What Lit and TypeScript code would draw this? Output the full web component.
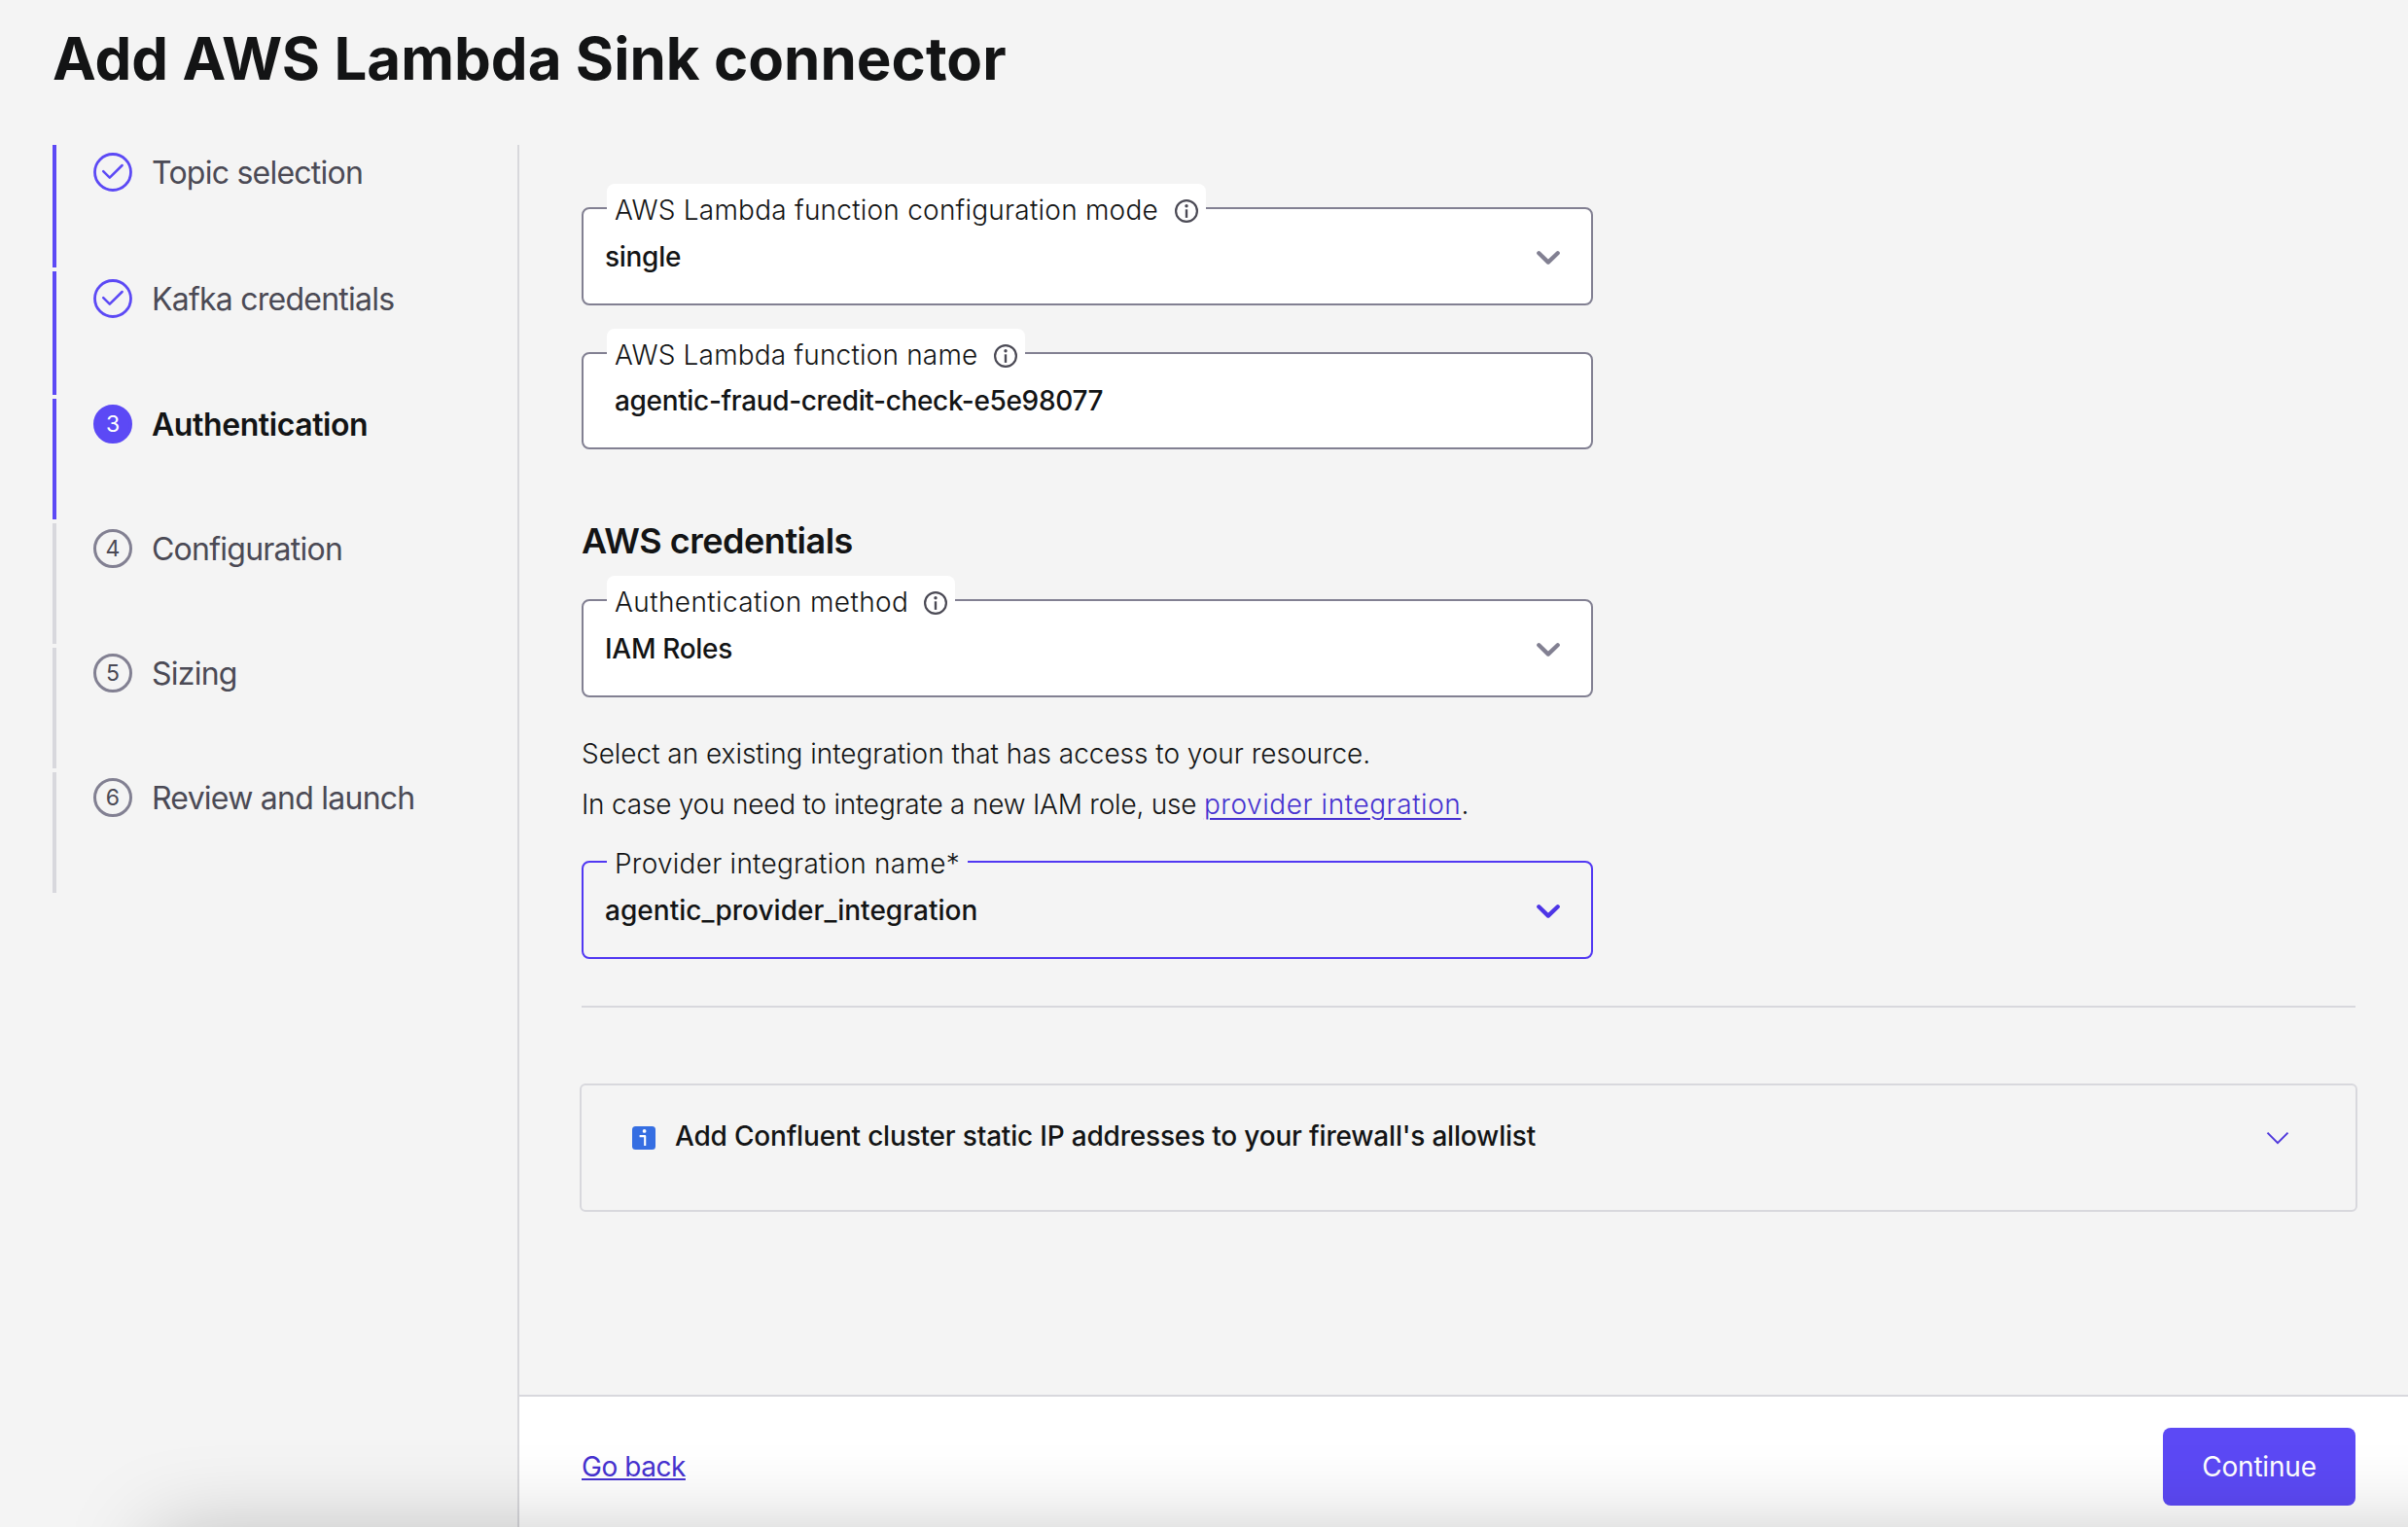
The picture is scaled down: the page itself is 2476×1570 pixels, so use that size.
import { LitElement, html, css, nothing, type TemplateResult } from "lit";
import { customElement } from "lit/decorators.js";

type StepState = "done" | "current" | "todo";
interface Step { label: string; state: StepState; }
interface Field { id: string; label: string; value: string; info: boolean; select: boolean; }

const STEPS: Step[] = [
  { label: "Topic selection", state: "done" },
  { label: "Kafka credentials", state: "done" },
  { label: "Authentication", state: "current" },
  { label: "Configuration", state: "todo" },
  { label: "Sizing", state: "todo" },
  { label: "Review and launch", state: "todo" },
];

const MODE: Field = { id: "mode", label: "AWS Lambda function configuration mode", value: "single", info: true, select: true };
const NAME: Field = { id: "name", label: "AWS Lambda function name", value: "agentic-fraud-credit-check-e5e98077", info: true, select: false };
const METHOD: Field = { id: "method", label: "Authentication method", value: "IAM Roles", info: true, select: true };
const PROVIDER: Field = { id: "provider", label: "Provider integration name*", value: "agentic_provider_integration", info: false, select: true };

const checkIcon = html`<svg class="check" viewBox="0 0 40 40" width="40" height="40" fill="none" stroke="currentColor">
  <circle cx="20" cy="20" r="18.5" stroke-width="2.8"></circle>
  <path d="M10.2 19.2 L16.8 25.6 L29.6 13" stroke-width="2.5" stroke-linecap="round" stroke-linejoin="round"></path>
</svg>`;

const infoIcon = html`<svg class="info" viewBox="0 0 24 24" width="24" height="24">
  <circle cx="12" cy="12" r="10.9" fill="none" stroke="currentColor" stroke-width="2.2"></circle>
  <circle cx="12" cy="6.8" r="1.7" fill="currentColor"></circle>
  <path d="M12 10.3 V18.9" stroke="currentColor" stroke-width="2.4"></path>
</svg>`;

const selectChevron = html`<svg class="chevron" viewBox="0 0 24 16" width="24" height="16" fill="none" stroke="currentColor">
  <path d="M2.3 3.3 L11.9 12.6 L21.7 3.3" stroke-width="4.3" stroke-linecap="round" stroke-linejoin="round"></path>
</svg>`;

const noticeIcon = html`<svg class="notice-icon" viewBox="0 0 24 24" width="24" height="24">
  <rect width="24" height="24" rx="3.5" fill="#356ee2"></rect>
  <circle cx="12.6" cy="4.9" r="1.9" fill="#fff"></circle>
  <path d="M7.6 10.1 H13.2 V20" fill="none" stroke="#fff" stroke-width="2.1" stroke-linejoin="round"></path>
</svg>`;

const thinChevron = html`<svg class="thin" viewBox="0 0 24 14" width="24" height="14" fill="none" stroke="currentColor">
  <path d="M1.5 1.6 L12 12.2 L22.5 1.6" stroke-width="2"></path>
</svg>`;

@customElement("app-root")
export class AppRoot extends LitElement {
  static styles = css`
    :host {
      display: flex;
      flex-direction: column;
      position: relative;
      width: 2476px;
      height: 1570px;
      overflow: hidden;
      box-sizing: border-box;
      background: #f4f4f4;
      color: #131415;
      font-family: Inter, "Liberation Sans", sans-serif;
      font-size: 28px;
      font-weight: 300;
    }
    *, *::before { box-sizing: border-box; }
    h1, h2, p, ol { margin: 0; padding: 0; }
    svg { display: block; flex: none; }

    .header { height: 149px; padding: 24px 0 0 54px; flex: none; }
    .title { font-size: 60px; line-height: 72px; font-weight: 700; letter-spacing: 0.03px; white-space: nowrap; }

    .body { display: flex; flex: 1; min-height: 0; }
    .steps {
      display: flex; flex-direction: column; gap: 4px;
      width: 534px; padding-left: 54px; flex: none;
      border-right: 2px solid #d8d8dc;
      list-style: none;
    }
    .step {
      display: flex; align-items: flex-start; gap: 20px; height: 124px; flex: none;
      padding: 6px 0 0 38px; border-left: 4px solid #d8d8dd;
      font-size: 32px; line-height: 40px; font-weight: 400; letter-spacing: -0.76px;
      color: #4b4a55; white-space: nowrap;
    }
    .step.done { height: 126.4px; padding-top: 8px; border-color: #5c49f5; }
    .step.current { border-color: #5c49f5; color: #131415; font-weight: 600; letter-spacing: -0.42px; }
    .step-label { padding-top: 1px; }
    .check { color: #5c49f5; }
    .num {
      display: flex; align-items: center; justify-content: center;
      width: 40px; height: 40px; border-radius: 50%; border: 3px solid #828092;
      font-size: 23px; line-height: 34px; font-weight: 400; letter-spacing: 0; color: #4b4a55;
    }
    .current .num { background: #5c49f5; border-color: #5c49f5; color: #fff; }

    .main { display: flex; flex-direction: column; flex: 1; min-width: 0; }
    .content { flex: 1; padding: 64px 54px 0 64px; }

    .field {
      position: relative; display: flex; justify-content: space-between; align-items: flex-start;
      width: 1040px; height: 101px; padding: 29px 32px 0 22px;
      border: 2px solid #828092; border-radius: 8px; background: #fff;
    }
    .field.name { height: 100px; margin-top: 48px; padding-top: 28px; padding-left: 32px; }
    .field.method { margin-top: 38px; }
    .field.provider { margin-top: 32px; border-color: #5138f2; background: #f4f4f4; }
    .label {
      position: absolute; top: -26px; left: 24px; height: 54px; padding: 0 8px;
      display: flex; align-items: center; justify-content: space-between;
      border-radius: 8px; background: inherit; line-height: 54px; white-space: nowrap;
    }
    .mode .label { width: 616px; letter-spacing: 0.23px; }
    .name .label { width: 430px; letter-spacing: 0.18px; }
    .method .label { width: 358px; letter-spacing: 0.4px; }
    .provider .label { width: 371px; letter-spacing: 0.25px; }
    .info { color: #4b4a55; margin-top: 2px; }
    .value { line-height: 40px; font-weight: 500; letter-spacing: -0.3px; white-space: nowrap; }
    .name .value { letter-spacing: -0.34px; }
    .provider .value { letter-spacing: 0.03px; }
    .chevron { color: #828092; margin-top: 13px; }
    .provider .chevron { color: #4d35e6; }

    .section { margin-top: 72px; font-size: 36px; line-height: 44px; font-weight: 600; letter-spacing: -0.5px; }
    .help { margin-top: 32px; line-height: 52px; white-space: nowrap; }
    .help-line { display: block; letter-spacing: -0.03px; }
    .help-line.second { letter-spacing: -0.22px; }
    .link { color: #4632d0; text-decoration: underline; text-decoration-thickness: 2px; }
    .help .link { letter-spacing: 0.56px; text-underline-offset: 4px; }
    .rule { height: 2px; margin-top: 48px; background: #d8d8dd; }
    .notice {
      display: flex; align-items: flex-start; height: 132px; margin: 78px -2px 0;
      padding: 30px 68px 0 52px; border: 2px solid #d8d8dd; border-radius: 6px;
    }
    .notice-row { display: flex; align-items: center; gap: 20px; flex: 1; line-height: 44px; font-weight: 500; letter-spacing: -0.19px; white-space: nowrap; }
    .notice-text { flex: 1; }
    .notice-icon, .thin { margin-top: 4px; }
    .thin { color: #4f38dc; }

    .footer {
      display: flex; justify-content: space-between; align-items: flex-start; flex: none;
      height: 136px; padding: 32px 54px 0 64px; border-top: 2px solid #d8d8dd; background: #fff;
      line-height: 80px; font-weight: 400;
    }
    .footer .link { letter-spacing: -0.45px; text-underline-offset: 2px; text-decoration-skip-ink: none; }
    .button { width: 198px; height: 80px; border-radius: 8px; background: #5c49f5; color: #fff; text-align: center; letter-spacing: -0.19px; }
    .shade {
      position: absolute; left: 160px; right: -200px; top: 1580px; height: 200px;
      box-shadow: 0 0 90px rgba(0, 0, 0, 0.25); pointer-events: none;
    }
  `;

  private renderStep(step: Step, index: number): TemplateResult {
    return html`<li class="step ${step.state}">
      ${step.state === "done" ? checkIcon : html`<span class="num">${index + 1}</span>`}
      <span class="step-label">${step.label}</span>
    </li>`;
  }

  private renderField(f: Field): TemplateResult {
    return html`<div class="field ${f.id}">
      <div class="label"><span>${f.label}</span>${f.info ? infoIcon : nothing}</div>
      <span class="value">${f.value}</span>
      ${f.select ? selectChevron : nothing}
    </div>`;
  }

  render() {
    return html`
      <header class="header"><h1 class="title">Add AWS Lambda Sink connector</h1></header>
      <div class="body">
        <ol class="steps">${STEPS.map((s, i) => this.renderStep(s, i))}</ol>
        <main class="main">
          <section class="content">
            ${this.renderField(MODE)}
            ${this.renderField(NAME)}
            <h2 class="section">AWS credentials</h2>
            ${this.renderField(METHOD)}
            <p class="help">
              <span class="help-line">Select an existing integration that has access to your resource.</span>
              <span class="help-line second">In case you need to integrate a new IAM role, use <a class="link">provider integration</a>.</span>
            </p>
            ${this.renderField(PROVIDER)}
            <div class="rule"></div>
            <div class="notice">
              <div class="notice-row">
                ${noticeIcon}
                <span class="notice-text">Add Confluent cluster static IP addresses to your firewall's allowlist</span>
                ${thinChevron}
              </div>
            </div>
          </section>
          <footer class="footer">
            <a class="link">Go back</a>
            <div class="button">Continue</div>
          </footer>
        </main>
      </div>
      <div class="shade"></div>
    `;
  }
}
